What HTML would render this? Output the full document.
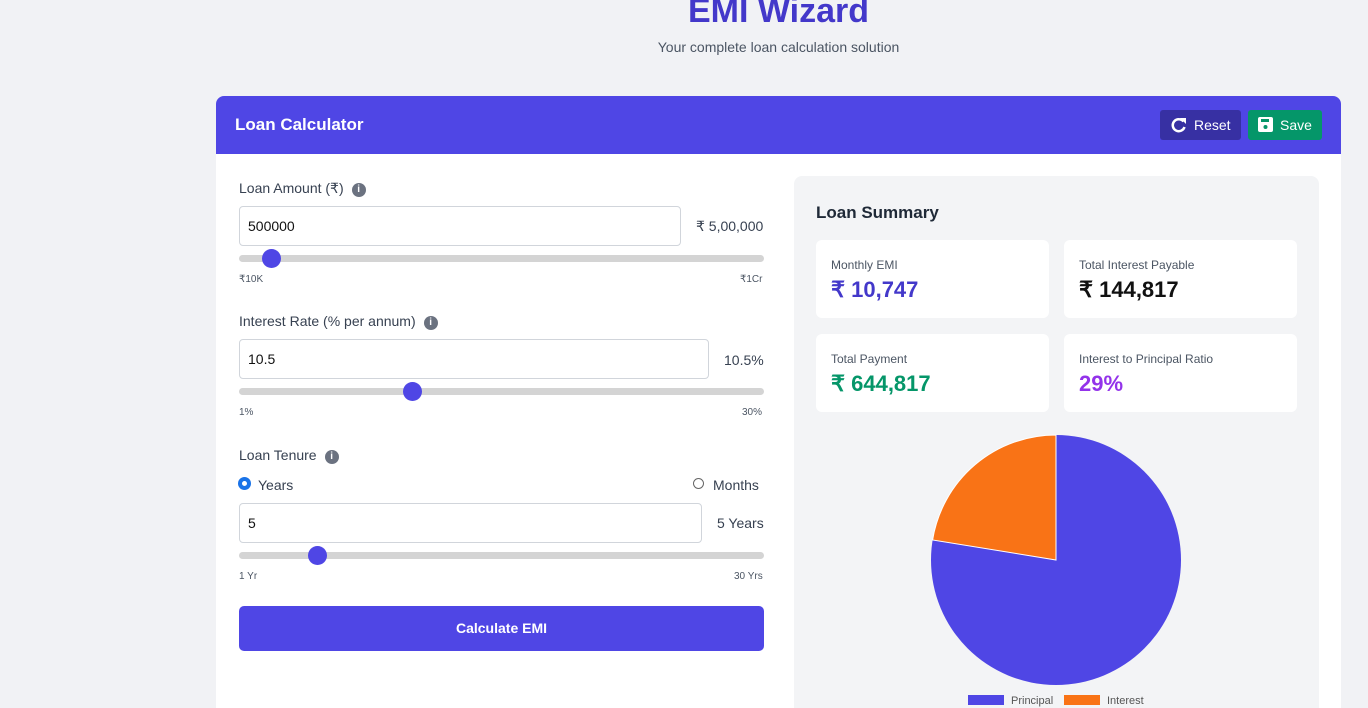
<!DOCTYPE html>
<html><head><meta charset="utf-8"><style>
*{box-sizing:border-box;margin:0;padding:0}
html,body{width:1368px;height:708px;overflow:hidden}
body{background:#f1f2f5;font-family:"Liberation Sans",sans-serif;color:#374151;position:relative}
.abs{position:absolute}
h1{position:absolute;left:0;width:1557px;text-align:center;top:-8px;font-size:34px;color:#4338ca;font-weight:bold}
.sub{left:0;width:1557px;text-align:center;top:39px;font-size:14px;color:#4b5563}
.card{left:216px;top:96px;width:1125px;height:612px;background:#fff;border-radius:8px 8px 0 0;overflow:hidden}
.hdr{left:0;top:0;width:1125px;height:58px;background:#4f46e5}
.lbl{font-size:14px;color:#374151}
.info{display:inline-block;width:14px;height:14px;border-radius:50%;background:#6b7280;color:#fff;font-size:10px;text-align:center;line-height:14px;font-weight:bold;margin-left:8px;vertical-align:1px}
.inp{border:1px solid #d1d5db;border-radius:4px;height:40px;font-size:14px;color:#111;padding:11px 8px}
.track{height:7px;background:#d4d4d4;border-radius:4px}
.thumb{width:19px;height:19px;border-radius:50%;background:#4f46e5}
.tiny{font-size:10px;color:#4b5563}
.box{background:#fff;border-radius:6px;width:233px;height:78px}
.bl{font-size:12px;color:#4b5563;position:absolute;left:15px;top:18px}
.bv{font-size:22px;font-weight:bold;position:absolute;left:15px;top:37px}
</style></head><body>
<h1>EMI Wizard</h1>
<div class="abs sub">Your complete loan calculation solution</div>
<div class="abs card">
 <div class="abs hdr">
  <div class="abs" style="left:19px;top:19px;color:#fff;font-weight:bold;font-size:17px">Loan Calculator</div>
  <div class="abs" style="left:944px;top:14px;width:81px;height:30px;background:#3730a3;border-radius:3px;color:#fff;font-size:14px;line-height:30px;padding-left:34px">Reset
   <svg class="abs" style="left:11px;top:7px" width="16" height="16" viewBox="0 0 16 16"><path d="M12.5 4.5A6 6 0 1 0 13.5 10" fill="none" stroke="#fff" stroke-width="2.5"/><path d="M9 1h6v6z" fill="#fff"/></svg></div>
  <div class="abs" style="left:1032px;top:14px;width:74px;height:30px;background:#059669;border-radius:3px;color:#fff;font-size:14px;line-height:30px;padding-left:32px">Save
   <svg class="abs" style="left:10px;top:7px" width="15" height="15" viewBox="0 0 15 15"><rect x="0" y="0" width="15" height="15" rx="2" fill="#fff"/><rect x="3" y="2" width="8" height="3" fill="#059669"/><circle cx="7.5" cy="10" r="2" fill="#059669"/></svg></div>
 </div>
 <div class="abs lbl" style="left:23px;top:84px">Loan Amount (₹)<span class="info">i</span></div>
 <div class="abs inp" style="left:23px;top:110px;width:442px">500000</div>
 <div class="abs lbl" style="left:480px;top:122px">₹ 5,00,000</div>
 <div class="abs track" style="left:23px;top:159px;width:525px"></div>
 <div class="abs thumb" style="left:46px;top:153px"></div>
 <div class="abs tiny" style="left:23px;top:178px">₹10K</div>
 <div class="abs tiny" style="left:524px;top:178px">₹1Cr</div>

 <div class="abs lbl" style="left:23px;top:217px">Interest Rate (% per annum)<span class="info">i</span></div>
 <div class="abs inp" style="left:23px;top:243px;width:470px">10.5</div>
 <div class="abs lbl" style="left:508px;top:256px">10.5%</div>
 <div class="abs track" style="left:23px;top:292px;width:525px"></div>
 <div class="abs thumb" style="left:187px;top:286px"></div>
 <div class="abs tiny" style="left:23px;top:311px">1%</div>
 <div class="abs tiny" style="left:526px;top:311px">30%</div>

 <div class="abs lbl" style="left:23px;top:351px">Loan Tenure<span class="info">i</span></div>
 <div class="abs" style="left:23px;top:382px;width:11px;height:11px;border-radius:50%;border:3px solid #1a73e8;background:#fff;box-shadow:0 0 0 1px #1a73e8"></div>
 <div class="abs lbl" style="left:42px;top:381px">Years</div>
 <div class="abs" style="left:477px;top:382px;width:11px;height:11px;border-radius:50%;border:1px solid #666"></div>
 <div class="abs lbl" style="left:497px;top:381px">Months</div>
 <div class="abs inp" style="left:23px;top:407px;width:463px">5</div>
 <div class="abs lbl" style="left:501px;top:419px">5 Years</div>
 <div class="abs track" style="left:23px;top:456px;width:525px"></div>
 <div class="abs thumb" style="left:92px;top:450px"></div>
 <div class="abs tiny" style="left:23px;top:475px">1 Yr</div>
 <div class="abs tiny" style="left:518px;top:475px">30 Yrs</div>
 <div class="abs" style="left:23px;top:510px;width:525px;height:45px;background:#4f46e5;border-radius:5px;color:#fff;font-weight:bold;font-size:14px;text-align:center;line-height:45px">Calculate EMI</div>

 <div class="abs" style="left:578px;top:80px;width:525px;height:600px;background:#f3f4f6;border-radius:8px">
  <div class="abs" style="left:22px;top:27px;font-size:17px;font-weight:bold;color:#1f2937">Loan Summary</div>
  <div class="abs box" style="left:22px;top:64px"><div class="bl">Monthly EMI</div><div class="bv" style="color:#4338ca">₹ 10,747</div></div>
  <div class="abs box" style="left:270px;top:64px"><div class="bl">Total Interest Payable</div><div class="bv" style="color:#111">₹ 144,817</div></div>
  <div class="abs box" style="left:22px;top:158px"><div class="bl">Total Payment</div><div class="bv" style="color:#059669">₹ 644,817</div></div>
  <div class="abs box" style="left:270px;top:158px"><div class="bl">Interest to Principal Ratio</div><div class="bv" style="color:#9333ea">29%</div></div>
 </div>
</div>
<svg class="abs" style="left:0;top:0" width="1368" height="708">
 <circle cx="1056" cy="560" r="125" fill="#4f46e5"/>
 <path d="M1056 560 L1056 435 A125 125 0 0 0 932.6 540 Z" fill="#f97316" stroke="#fff" stroke-width="1"/>
 <rect x="968" y="695" width="36" height="10" fill="#4f46e5"/>
 <text x="1011" y="704" font-size="11" fill="#555" font-family="Liberation Sans">Principal</text>
 <rect x="1064" y="695" width="36" height="10" fill="#f97316"/>
 <text x="1107" y="704" font-size="11" fill="#555" font-family="Liberation Sans">Interest</text>
</svg>
</body></html>
